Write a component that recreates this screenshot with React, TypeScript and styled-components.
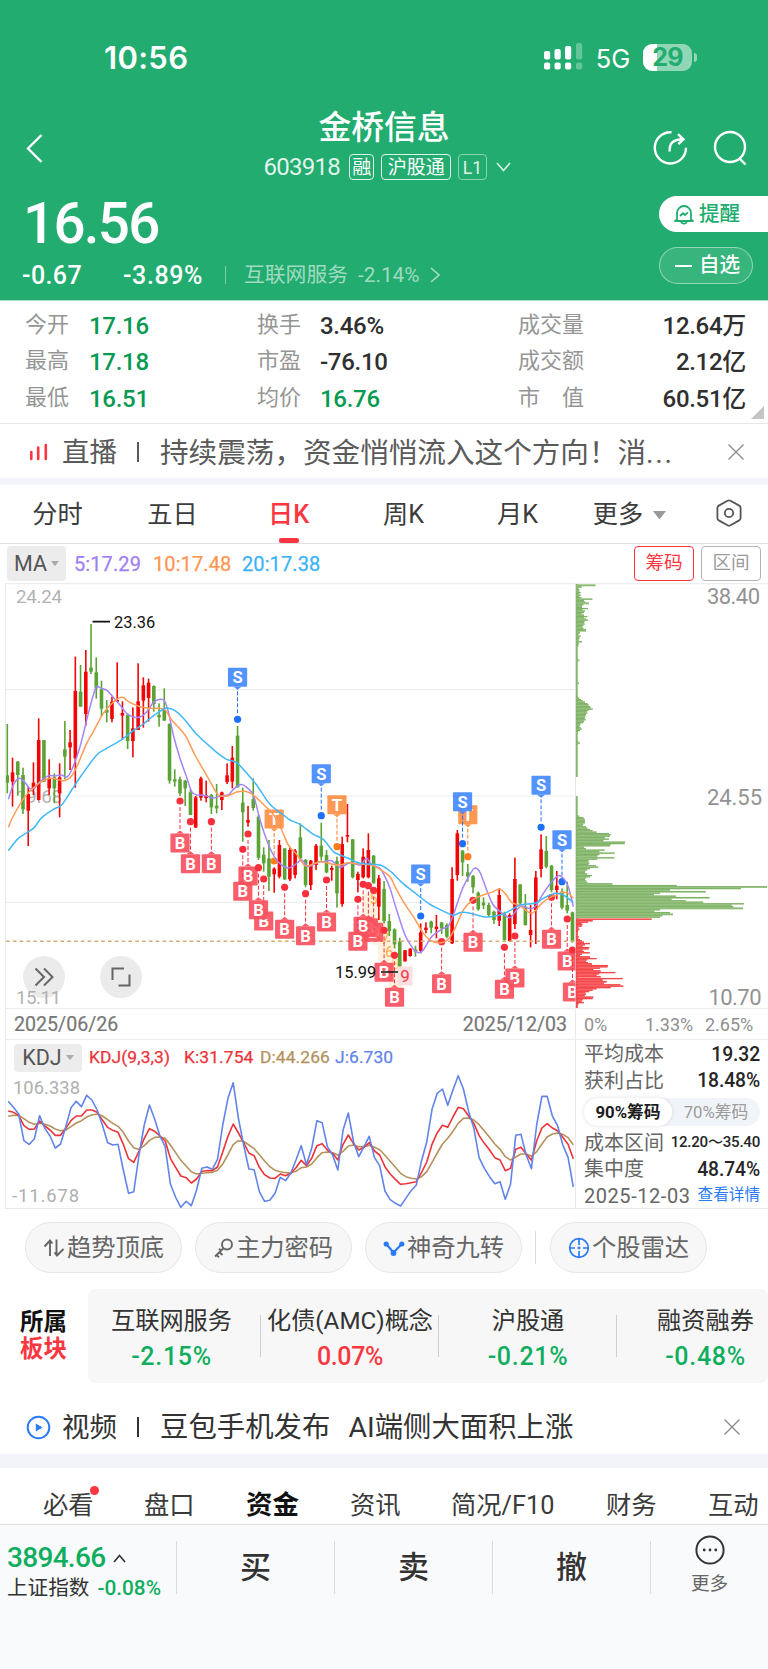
import React from 'react';
import styled, { createGlobalStyle, css } from 'styled-components';

const RED = '#fa3741';
const GREEN = '#0fae5f';
const BRAND = '#22ac6f';

const Global = createGlobalStyle`
  html, body { margin: 0; padding: 0; background: #fff; }
  * { box-sizing: border-box; }
  body {
    width: 768px;
    font-family: Roboto, "Noto Sans CJK SC", sans-serif;
    line-height: 1;
    color: #333;
    white-space: nowrap;
    overflow-x: hidden;
  }
  svg { display: block; flex: none; }
`;

const Page = styled.div`
  width: 768px;
  height: 1669px;
  display: flex;
  flex-direction: column;
  overflow: hidden;
  background: #fff;
`;

/* ---------- header ---------- */

const Header = styled.header`
  height: 301px;
  flex: none;
  background: ${BRAND};
  color: #fff;
  border-bottom: 1px solid #a5dfc5;
`;

const StatusBar = styled.div`
  height: 108px;
  padding: 6px 71px 0 104px;
  display: flex;
  align-items: center;
  font-family: Inter, sans-serif;
`;

const Clock = styled.span`
  font-size: 31px;
  font-weight: 600;
  letter-spacing: 0.3px;
  margin-right: auto;
`;

const Network = styled.span`
  font-size: 25.5px;
  margin: 3px 13px 0 13px;
  letter-spacing: -0.2px;
`;

const Battery = styled.div`
  width: 49px;
  height: 27px;
  border-radius: 9px;
  background: linear-gradient(90deg, #fff 14px, #90d6b7 14px);
  color: ${BRAND};
  font-size: 25px;
  font-weight: 700;
  letter-spacing: -0.8px;
  display: flex;
  align-items: center;
  justify-content: center;
`;

const BatteryNub = styled.i`
  width: 3px;
  height: 9px;
  margin-left: 2px;
  border-radius: 0 3px 3px 0;
  background: #90d6b7;
`;

const TitleBar = styled.div`
  height: 76px;
  padding: 2px 21px 0 25px;
  display: grid;
  grid-template-columns: 94px 1fr 98px;
  align-items: center;
`;

const TitleBlock = styled.div`
  display: flex;
  flex-direction: column;
  align-items: center;
  height: 76px;
`;

const StockName = styled.h1`
  margin: 0;
  height: 35px;
  line-height: 36px;
  font-size: 32.8px;
  font-weight: 500;
`;

const CodeLine = styled.div`
  margin: 9px 0 0 6px;
  height: 26px;
  display: flex;
  align-items: center;
  gap: 7px;
`;

const Code = styled.span`
  font-size: 24px;
  letter-spacing: -0.7px;
  color: rgba(255, 255, 255, 0.88);
  margin-right: 2px;
`;

const Tag = styled.span<{ $dim?: boolean }>`
  height: 26px;
  padding: 0 ${p => (p.$dim ? 3.5 : 5.5)}px;
  border: 1px solid rgba(255, 255, 255, ${p => (p.$dim ? 0.55 : 0.85)});
  border-radius: 4px;
  font-size: ${p => (p.$dim ? 17.6 : 19)}px;
  line-height: 26px;
  opacity: ${p => (p.$dim ? 0.85 : 1)};
  &:nth-child(2) { padding: 0 2px; }
`;

const TitleActions = styled.div`
  display: flex;
  justify-content: flex-end;
  gap: 25px;
`;

const Quote = styled.div`
  display: flex;
  justify-content: space-between;
  padding: 12px 0 0 22px;
`;

const Price = styled.div`
  margin-left: 1px;
  font-size: 56.5px;
  font-weight: 500;
  letter-spacing: -1.7px;
`;

const ChangeLine = styled.div`
  margin-top: 9.5px;
  height: 26px;
  display: flex;
  align-items: center;
  font-size: 25px;
  font-weight: 500;
`;

const Delta = styled.span`
  width: 101px;
  letter-spacing: 0.4px;
`;

const DeltaPct = styled.span`
  width: 102px;
  letter-spacing: 0.6px;
`;

const IndustryLink = styled.span`
  height: 18px;
  padding-left: 18px;
  border-left: 1px solid rgba(255, 255, 255, 0.4);
  display: flex;
  align-items: center;
  gap: 10px;
  font-size: 20.8px;
  font-weight: 400;
  color: rgba(255, 255, 255, 0.58);
`;

const QuoteActions = styled.div`
  width: 109px;
  display: flex;
  flex-direction: column;
  gap: 15px;
`;

const AlertButton = styled.div`
  height: 36px;
  padding-left: 15px;
  border-radius: 18px 0 0 18px;
  background: #fff;
  color: ${BRAND};
  display: flex;
  align-items: center;
  gap: 5px;
  font-size: 20.6px;
  font-weight: 500;
`;

const WatchButton = styled(AlertButton)`
  width: 94px;
  height: 37px;
  border-radius: 19px;
  border: 1px solid rgba(255, 255, 255, 0.45);
  background: rgba(255, 255, 255, 0.1);
  color: #fff;
  gap: 7px;
`;

/* ---------- key figures ---------- */

const Figures = styled.section`
  height: 123px;
  flex: none;
  padding: 5.5px 22px 0 25px;
  display: grid;
  grid-template-columns: 64px 168px 63px 198px 90px 1fr;
  grid-auto-rows: 36.6px;
  align-items: center;
  position: relative;
  border-bottom: 1px solid #e8e8e8;
`;

const FigureLabel = styled.span<{ $spread?: boolean }>`
  font-size: 22px;
  color: #959595;
  ${p => p.$spread && css`
    width: 66px;
    display: flex;
    justify-content: space-between;
  `}
`;

const FigureValue = styled.span<{ $down?: boolean; $right?: boolean }>`
  padding-top: 2px;
  font-size: 24px;
  font-weight: 500;
  letter-spacing: -0.3px;
  color: ${p => (p.$down ? '#079a52' : '#2f2f2f')};
  text-align: ${p => (p.$right ? 'right' : 'left')};
`;

const Corner = styled.i`
  position: absolute;
  right: 4px;
  bottom: 4px;
  border-style: solid;
  border-width: 0 0 13px 13px;
  border-color: transparent transparent #c4c4c4 transparent;
`;

/* ---------- news strips ---------- */

const LiveStrip = styled.section`
  height: 54px;
  flex: none;
  padding: 1px 24px 0 26px;
  display: flex;
  align-items: center;
  font-size: 28.6px;
  color: #5a5a5a;
`;

const VideoStrip = styled(LiveStrip)`
  height: 71px;
  padding: 17px 28px 0 26px;
  font-size: 28.4px;
  color: #333;
`;

const StripKind = styled.span`
  width: 75px;
  margin-left: 11px;
  padding-top: 2px;
  font-size: 27.5px;
`;

const StripBar = styled.i`
  width: 2px;
  height: 20px;
  background: currentColor;
  margin-right: 21px;
`;

const StripText = styled.span`
  flex: 1;
  padding-top: 3px;
  word-spacing: 11px;
`;

const Dots = styled.span`
  letter-spacing: 1.6px;
`;

const Band = styled.div<{ $h: number }>`
  height: ${p => p.$h}px;
  flex: none;
  background: #f2f4f9;
`;

/* ---------- period tabs ---------- */

const Periods = styled.nav`
  height: 59px;
  flex: none;
  display: grid;
  grid-template-columns: 115px 115px 117px 113px 115px 109px 1fr;
  border-bottom: 1px solid #e2e2e2;
  font-size: 25.2px;
  color: #3c3c3c;
`;

const Period = styled.div<{ $on?: boolean }>`
  position: relative;
  display: flex;
  align-items: center;
  justify-content: center;
  gap: 10px;
  padding-top: 2px;
  color: ${p => (p.$on ? RED : 'inherit')};
  font-weight: ${p => (p.$on ? 500 : 400)};
  ${p => p.$on && css`
    &::after {
      content: '';
      position: absolute;
      bottom: 0;
      left: 50%;
      width: 20px;
      height: 5px;
      margin-left: -10px;
      border-radius: 2px;
      background: ${RED};
    }
  `}
`;

const PeriodSettings = styled(Period)`
  padding: 0 0 2px 6px;
`;

/* ---------- chart ---------- */

const MaRow = styled.div`
  height: 39px;
  flex: none;
  padding: 0 7px;
  display: flex;
  align-items: center;
  font-size: 20px;
`;

const Picker = styled.span<{ $w: number; $h: number }>`
  width: ${p => p.$w}px;
  height: ${p => p.$h}px;
  border-radius: 4px;
  background: #ececec;
  display: flex;
  align-items: center;
  justify-content: center;
  gap: 4px;
  font-size: 21.5px;
  font-weight: 400;
  color: #555;
`;

const Legend = styled.span<{ $c: string; $w: number }>`
  width: ${p => p.$w}px;
  letter-spacing: 0.1px;
  color: ${p => p.$c};
  -webkit-text-stroke: 0.25px ${p => p.$c};
`;

const MaLegend = styled.div`
  display: flex;
  margin-left: 8px;
  flex: 1;
`;

const Toggle = styled.span<{ $on?: boolean }>`
  width: 60px;
  height: 35px;
  margin-left: 7px;
  border: 1px solid ${p => (p.$on ? RED : '#b4b4b4')};
  border-radius: 4px;
  color: ${p => (p.$on ? RED : '#999')};
  font-size: 18.6px;
  display: flex;
  align-items: center;
  justify-content: center;
`;

const ChartFrame = styled.section`
  position: relative;
  height: 626px;
  flex: none;
  margin-left: 5px;
  border-left: 1px solid #e9e9e9;
  border-bottom: 1px solid #e9e9e9;
  & > svg { position: relative; z-index: 1; }
`;

const RoundTools = styled.div`
  position: absolute;
  left: 17px;
  top: 373px;
  display: flex;
  gap: 35px;
`;

const RoundTool = styled.span`
  width: 42px;
  height: 42px;
  border-radius: 50%;
  background: #ebebeb;
  display: flex;
  align-items: center;
  justify-content: center;
`;

const AxisRow = styled.div`
  height: 32px;
  display: grid;
  grid-template-columns: 570px 1fr;
  border-bottom: 1px solid #ececec;
  border-top: 1px solid #ececec;
`;

const Dates = styled.div`
  padding: 1px 8px 0 8px;
  border-right: 1px solid #e9e9e9;
  display: flex;
  align-items: center;
  justify-content: space-between;
  font-size: 19.6px;
  color: #777;
  -webkit-text-stroke: 0.2px #777;
`;

const Shares = styled.div`
  padding: 1px 0 0 8px;
  display: grid;
  grid-template-columns: 61px 60px 1fr;
  align-items: center;
  font-size: 18px;
  color: #8f8f8f;
`;

const LowerRow = styled.div`
  display: grid;
  grid-template-columns: 570px 1fr;
  height: 168px;
`;

const Indicator = styled.div`
  border-right: 1px solid #e9e9e9;
`;

const IndicatorHead = styled.div`
  height: 34px;
  padding: 1px 0 0 8px;
  display: flex;
  align-items: center;
  font-size: 17.4px;
`;

const KdjLegends = styled.div`
  display: flex;
  margin-left: 7px;
`;

const Cost = styled.aside`
  padding: 1px 8px 0 8px;
  display: flex;
  flex-direction: column;
  color: #666;
`;

const CostRow = styled.div`
  height: 26.5px;
  display: flex;
  align-items: center;
  justify-content: space-between;
  font-size: 20px;
`;

const CostValue = styled.b<{ $small?: boolean }>`
  font-size: ${p => (p.$small ? 15.1 : 19.3)}px;
  letter-spacing: ${p => (p.$small ? -0.25 : -0.1)}px;
  font-weight: 500;
  color: #262626;
`;

const CostDate = styled.span`
  letter-spacing: 0.55px;
  color: #666;
`;

const DetailLink = styled.a`
  font-size: 15.6px;
  color: #2b7bf7;
`;

const Segments = styled.div`
  height: 28px;
  margin: 4px 0 3.5px;
  border-radius: 14px;
  background: #f1f5f9;
  display: grid;
  grid-template-columns: 1fr 1fr;
`;

const Segment = styled.span<{ $on?: boolean }>`
  border-radius: 14px;
  display: flex;
  align-items: center;
  justify-content: center;
  font-size: 16.8px;
  font-weight: ${p => (p.$on ? 700 : 400)};
  color: ${p => (p.$on ? '#1c1c1c' : '#9b9b9b')};
  ${p => p.$on && css`
    background: #fff;
    box-shadow: 0 0 4px rgba(120, 140, 160, 0.25);
  `}
`;

/* ---------- shortcuts & sectors ---------- */

const Shortcuts = styled.section`
  height: 80px;
  flex: none;
  padding: 13px 0 0 25px;
  display: flex;
  gap: 13px;
`;

const Chip = styled.div`
  width: 157px;
  height: 51px;
  border: 1px solid #e6e6e6;
  border-radius: 26px;
  background: #f7f7f7;
  display: flex;
  align-items: center;
  justify-content: center;
  gap: 2px;
  padding-top: 1px;
  font-size: 24.3px;
  color: #666;
`;

const ChipRule = styled.i`
  width: 1px;
  height: 33px;
  margin: 9px 1px 0 0;
  background: #dcdcdc;
`;

const Sectors = styled.section`
  height: 94px;
  flex: none;
  display: grid;
  grid-template-columns: 88px 680px;
`;

const SectorTitle = styled.div`
  padding: 22px 0 0 20px;
  display: flex;
  flex-direction: column;
  gap: 4px;
  font-size: 23.4px;
  font-weight: 700;
  color: #111;
  em { font-style: normal; color: ${RED}; }
`;

const SectorCard = styled.div`
  border-radius: 8px;
  background: #f7f7f7;
  display: grid;
  grid-template-columns: 173px 178px 178px 1fr;
`;

const Sector = styled.div<{ $up?: boolean }>`
  padding-top: 20px;
  display: flex;
  flex-direction: column;
  align-items: center;
  gap: 11px;
  font-size: 24.2px;
  color: #333;
  &:first-child { padding-right: 6px; }
  &:last-child { padding-left: 26px; }
  &:not(:last-child) {
    background: linear-gradient(#cfcfcf, #cfcfcf) right 26px / 1px 42px no-repeat;
  }
  b {
    font-size: 25px;
    font-weight: 500;
    letter-spacing: ${p => (p.$up ? -0.4 : 0.7)}px;
    color: ${p => (p.$up ? RED : GREEN)};
  }
`;

/* ---------- bottom ---------- */

const InfoTabs = styled.nav`
  height: 55px;
  flex: none;
  padding: 1px 9px 0 43px;
  display: grid;
  grid-template-columns: 101px 102px 104px 101px 155px 102px 1fr;
  align-items: center;
  color: #3a3a3a;
  margin-top: 1px;
`;

const InfoTab = styled.span<{ $on?: boolean; $dot?: boolean }>`
  position: relative;
  padding-top: 17px;
  font-size: ${p => (p.$on ? 26.5 : 25.3)}px;
  font-weight: ${p => (p.$on ? 700 : 400)};
  color: ${p => (p.$on ? '#111' : 'inherit')};
  ${p => p.$dot && css`
    &::after {
      content: '';
      position: absolute;
      left: 47px;
      top: 10px;
      width: 9px;
      height: 9px;
      border-radius: 50%;
      background: ${RED};
    }
  `}
`;

const TradeBar = styled.footer`
  flex: 1;
  border-top: 1px solid #dedede;
  background: #f9fafc;
  padding-top: 16px;
  display: grid;
  grid-template-columns: 176px 158px 158px 158px 118px;
  grid-template-rows: 53px;
`;

const IndexCell = styled.div`
  padding: 3px 0 0 7px;
  display: flex;
  flex-direction: column;
  gap: 6px;
`;

const IndexValue = styled.div`
  display: flex;
  align-items: center;
  gap: 8px;
  font-size: 28px;
  font-weight: 500;
  letter-spacing: -0.7px;
  color: ${GREEN};
`;

const IndexName = styled.div`
  display: flex;
  gap: 8px;
  font-size: 20.6px;
  color: #333;
  b { font-size: 20.8px; font-weight: 500; color: ${GREEN}; }
`;

const TradeCell = styled.div`
  border-left: 1px solid #dcdcdc;
  display: flex;
  align-items: center;
  justify-content: center;
  font-size: 31px;
  font-weight: 500;
  color: #333;
`;

const MoreCell = styled(TradeCell)`
  height: 53px;
  flex-direction: column;
  gap: 10px;
  padding-bottom: 6px;
  font-size: 18.6px;
  font-weight: 400;
  color: #666;
`;

/* ---------- chart data ---------- */

const T0 = 540;
const vy = (v: number) => T0 + v / 3;
const cx = (i: number) => 7.3 + i * 5.233;

// colour, wick top, wick bottom, body top, body bottom
const candles: [string, number, number, number, number][] = [
  ['g', 552, 760, 706, 728], ['r', 653, 800, 697, 725], ['g', 663, 767, 665, 705], ['g', 683, 822, 705, 808],
  ['r', 740, 918, 762, 812], ['r', 667, 765, 728, 745], ['r', 535, 782, 600, 780], ['g', 600, 725, 600, 725],
  ['r', 658, 765, 715, 745], ['g', 700, 790, 712, 745], ['r', 670, 832, 712, 760], ['g', 543, 718, 628, 650],
  ['r', 570, 690, 607, 622], ['r', 350, 743, 453, 655], ['g', 375, 500, 455, 500], ['r', 330, 557, 395, 522],
  ['g', 252, 402, 383, 395], ['g', 352, 476, 397, 445], ['g', 422, 528, 448, 506], ['g', 480, 547, 510, 518],
  ['r', 470, 547, 485, 537], ['r', 367, 485, 480, 485], ['r', 484, 600, 519, 527], ['g', 523, 627, 525, 603],
  ['r', 502, 652, 565, 603], ['r', 370, 570, 484, 570], ['r', 412, 563, 436, 482], ['r', 416, 545, 428, 474],
  ['g', 436, 515, 438, 492], ['g', 490, 560, 525, 532], ['g', 445, 542, 510, 542], ['g', 550, 731, 552, 722],
  ['g', 688, 740, 718, 725], ['g', 710, 768, 718, 760], ['g', 720, 798, 722, 745], ['g', 748, 825, 757, 825],
  ['r', 768, 863, 772, 863], ['r', 710, 782, 715, 773], ['r', 722, 787, 766, 774], ['g', 762, 822, 765, 802],
  ['g', 732, 820, 797, 805], ['r', 755, 810, 757, 780], ['r', 670, 732, 706, 726], ['r', 618, 745, 653, 725],
  ['g', 558, 743, 587, 742], ['g', 743, 905, 788, 817], ['r', 798, 860, 840, 848], ['g', 715, 812, 778, 804],
  ['g', 825, 960, 830, 953], ['g', 922, 995, 944, 970], ['g', 900, 1053, 955, 1010], ['r', 982, 1058, 986, 1003],
  ['r', 900, 1015, 915, 1010], ['g', 925, 1020, 925, 1018], ['r', 923, 1023, 930, 1018], ['r', 927, 1015, 932, 1005],
  ['g', 850, 960, 892, 955], ['g', 957, 1042, 960, 1035], ['r', 960, 1050, 962, 1035], ['r', 912, 990, 917, 975],
  ['g', 848, 962, 917, 950], ['g', 930, 1000, 945, 997], ['r', 977, 1022, 984, 990], ['g', 950, 1103, 963, 1060],
  ['r', 890, 1100, 912, 1092], ['r', 792, 907, 885, 890], ['g', 897, 1015, 898, 1012], ['r', 995, 1057, 1002, 1020],
  ['r', 925, 1015, 950, 1012], ['r', 880, 1015, 930, 1012], ['g', 945, 1030, 947, 1030], ['r', 1005, 1140, 1015, 1100],
  ['g', 1023, 1150, 1047, 1143], ['g', 1122, 1188, 1143, 1173], ['g', 1165, 1225, 1168, 1213], ['g', 1193, 1282, 1205, 1280],
  ['r', 1230, 1265, 1231, 1264], ['r', 1225, 1250, 1226, 1248], ['g', 1217, 1250, 1228, 1235], ['r', 1150, 1240, 1177, 1233],
  ['r', 1147, 1180, 1163, 1170], ['g', 1142, 1180, 1145, 1163], ['r', 1125, 1195, 1160, 1167], ['g', 1147, 1182, 1147, 1165],
  ['g', 1150, 1195, 1155, 1190], ['r', 982, 1212, 1017, 1210], ['r', 870, 1022, 880, 1005], ['g', 930, 1008, 932, 967],
  ['g', 972, 1025, 997, 1010], ['g', 1005, 1060, 1008, 1042], ['g', 1055, 1112, 1058, 1108], ['g', 1072, 1107, 1088, 1096],
  ['g', 1088, 1132, 1095, 1125], ['g', 1112, 1152, 1115, 1140], ['r', 1045, 1158, 1065, 1142], ['g', 1115, 1202, 1120, 1200],
  ['r', 1120, 1205, 1125, 1203], ['r', 953, 1167, 1017, 1152], ['g', 1033, 1095, 1033, 1090], ['g', 1062, 1157, 1100, 1155],
  ['r', 1095, 1222, 1170, 1185], ['r', 993, 1212, 1012, 1110], ['r', 883, 1012, 928, 987], ['g', 888, 985, 933, 980],
  ['g', 975, 1057, 977, 1050], ['r', 993, 1078, 1037, 1050], ['g', 1045, 1108, 1055, 1103], ['g', 1025, 1120, 1095, 1112],
  ['g', 1115, 1208, 1117, 1205],
];

const ma5 = [25,778,40,735,57,715,72,724,90,746,105,742,120,725,147,707,165,708,185,705,200,711,215,690,240,620,265,520,280,465,290,440,305,445,322,452,340,472,360,495,380,520,400,531,420,531,440,516,460,488,480,478,493,482,505,515,520,585,540,655,560,712,575,755,590,765,610,765,640,774,665,767,685,765,700,748,720,734,735,738,760,765,780,840,800,900,820,945,840,971,865,984,885,974,905,960,925,980,950,968,970,965,995,962,1020,982,1050,968,1080,975,1100,955,1115,975,1140,985,1155,1010,1170,1045,1190,1110,1215,1185,1240,1227,1255,1238,1270,1230,1295,1190,1325,1168,1345,1158,1360,1125,1385,1052,1405,1012,1423,985,1440,997,1460,1050,1480,1095,1510,1122,1530,1133,1550,1110,1565,1098,1585,1105,1605,1100,1630,1060,1655,1025,1675,1007,1690,1015,1705,1040,1720,1100];
const ma10 = [25,862,40,828,75,770,110,735,150,715,190,722,215,708,235,670,260,610,280,575,310,520,345,482,368,472,385,485,420,500,450,505,493,508,515,540,555,585,585,645,625,715,655,765,685,767,710,756,735,754,760,765,795,798,820,823,845,870,865,915,890,943,915,977,940,972,965,965,995,972,1020,975,1045,968,1080,972,1115,975,1140,988,1170,1010,1185,1040,1210,1085,1240,1130,1270,1180,1295,1203,1325,1208,1345,1198,1365,1165,1390,1110,1420,1078,1450,1065,1475,1057,1498,1047,1515,1060,1535,1087,1560,1097,1595,1120,1625,1090,1655,1070,1670,1065,1685,1057,1705,1060,1720,1075];
const ma20 = [25,932,55,895,100,865,125,833,160,808,185,795,215,750,245,705,290,645,320,625,360,602,400,572,430,552,450,535,475,517,500,504,525,512,555,540,590,583,650,637,680,658,710,668,745,705,770,735,810,793,850,825,870,840,900,853,940,883,970,898,1000,935,1020,945,1050,957,1080,970,1140,975,1175,997,1205,1027,1240,1055,1290,1093,1340,1118,1360,1126,1385,1117,1420,1122,1455,1131,1500,1125,1530,1112,1560,1095,1605,1090,1630,1075,1665,1060,1690,1065,1720,1087];

// smooth curve through the averages
const curve = (flat: number[]) => {
  const pts: [number, number][] = [];
  for (let i = 0; i < flat.length; i += 2) pts.push([flat[i] / 3, vy(flat[i + 1])]);
  let d = `M${pts[0][0]} ${pts[0][1]}`;
  for (let i = 0; i < pts.length - 1; i++) {
    const a = pts[Math.max(0, i - 1)];
    const b = pts[i];
    const c = pts[i + 1];
    const e = pts[Math.min(pts.length - 1, i + 2)];
    d += `C${b[0] + (c[0] - a[0]) / 7} ${b[1] + (c[1] - a[1]) / 7} ${c[0] - (e[0] - b[0]) / 7} ${c[1] - (e[1] - b[1]) / 7} ${c[0]} ${c[1]}`;
  }
  return d;
};

type Mark = [kind: 'B' | 'S' | 'T', index: number, level: number];
const marks: Mark[] = [
  ['B', 33, 783], ['B', 35, 845], ['B', 39, 845], ['B', 46, 882], ['B', 45, 928], ['B', 49, 1017], ['B', 48, 983],
  ['B', 53, 1042], ['B', 57, 1061], ['B', 61, 1020], ['B', 70, 1051], ['B', 69, 1037], ['B', 68, 1033], ['B', 67, 1078],
  ['B', 72, 1171], ['B', 74, 1246], ['B', 83, 1205], ['B', 89, 1081], ['B', 97, 1188], ['B', 95, 1222],
  ['B', 104, 1072], ['B', 107, 1137], ['B', 108, 1230],
  ['T', 51, 963], ['T', 63, 920], ['T', 88, 950],
  ['S', 44, 538], ['S', 60, 827], ['S', 79, 1128], ['S', 87, 911], ['S', 102, 862], ['S', 106, 1025],
];
const markFill = { B: '#f9525f', S: '#478bff', T: '#ff9147' };
const markDot = { B: '#fa2f3e', S: '#1f6fff', T: '#ff7d1a' };

// level, bar end
const chipsUp = [136,107,141,65,146,55,150,58,154,58,158,62,162,58,166,62,170,58,174,64,178,97,182,72,186,75,190,87,195,70,199,66,203,66,206,84,210,68,214,75,218,72,222,65,226,72,230,82,234,72,238,78,241,84,245,74,249,72,253,74,257,70,261,66,265,70,269,78,273,78,277,60,281,58,285,55,289,62,293,58,297,58,301,56,306,66,310,57,314,55,318,55,361,58,430,57,471,54,475,58,479,63,483,68,487,75,491,82,495,86,500,90,504,92,508,98,512,85,516,80,520,82,524,78,528,76,532,76,536,74,540,77,544,72,548,70,552,62,556,60,560,58,564,62,568,65,572,60,576,54,606,55,610,60,614,54,829,58,833,70,837,73,841,75,845,74,849,75,853,70,857,68,861,78,865,82,869,90,873,98,877,110,881,147,885,152,889,150,893,135,898,147,902,130,907,195,911,194,915,152,918,150,922,72,926,78,931,134,935,118,940,164,944,118,948,112,954,163,958,112,962,86,966,85,970,88,974,85,978,108,982,115,986,90,990,82,994,76,998,75,1002,82,1007,96,1011,90,1015,78,1019,75,1023,78,1027,82,1032,157,1037,350,1041,621,1046,543,1050,330,1055,437,1060,300,1064,282,1069,348,1073,449,1078,335,1083,377,1087,430,1092,552,1096,515,1100,520,1105,549,1110,300,1114,283,1118,330,1123,339,1128,307,1132,300];
const chipsDown = [1138,275,1142,98,1147,84,1151,65,1155,68,1159,65,1163,55,1168,58,1172,55,1176,54,1180,53,1185,54,1190,56,1195,55,1199,60,1203,66,1207,72,1211,90,1215,75,1219,68,1223,88,1227,86,1231,68,1235,72,1239,89,1243,66,1247,60,1251,90,1256,110,1260,82,1264,78,1268,84,1272,96,1277,144,1281,143,1285,120,1289,100,1293,122,1298,166,1302,118,1306,110,1310,122,1316,188,1320,128,1325,140,1330,132,1335,181,1339,190,1343,152,1347,110,1351,98,1355,88,1359,76,1363,78,1367,74,1372,100,1376,98,1380,68,1384,65,1388,72,1392,56,1396,54,1400,52];

const bars = (flat: number[], light: string, dark: string) => {
  const out: React.ReactNode[] = [];
  for (let i = 0; i < flat.length; i += 2) {
    const next = flat[i + 2] ?? flat[i] + 4;
    const h = Math.min(next - flat[i], 5) / 3 + 0.05;
    const w = (flat[i + 1] - 48) / 3;
    const y = vy(flat[i]) - 0.7;
    out.push(
      <g key={i}>
        <rect x={576} y={y} width={w} height={h} fill={light} />
        <rect x={576} y={y} width={w} height={0.6} fill={dark} />
      </g>,
    );
  }
  return out;
};

const lineJ = [214,232,252,332,343,327,257,295,318,354,342,290,233,214,230,196,210,240,285,338,345,343,420,490,485,375,285,225,268,318,350,462,502,532,514,527,480,415,411,418,388,285,205,158,265,345,417,419,485,514,511,490,442,452,430,390,347,404,355,272,278,350,375,420,300,249,335,380,350,319,383,407,483,509,520,528,505,482,465,392,335,238,190,177,226,180,137,177,245,295,383,415,440,461,455,508,463,316,313,375,416,285,199,199,258,287,345,382,471];
const lineK = [243,247,256,287,298,297,273,288,300,316,316,295,272,258,258,240,240,247,270,292,301,307,343,386,397,363,325,296,304,318,333,385,412,438,443,459,447,424,422,422,411,366,319,282,309,338,369,377,412,434,444,445,432,437,430,413,391,407,385,347,341,360,370,390,343,315,341,360,352,338,363,375,410,432,448,463,461,458,455,427,396,343,308,286,292,261,232,236,258,280,317,340,360,383,390,422,415,358,352,372,391,333,294,281,294,302,322,343,386];
const lineD = [259,256,256,266,277,283,280,283,288,297,302,300,290,279,272,261,255,252,258,269,280,289,307,333,354,358,347,331,322,321,325,345,368,391,408,425,432,430,428,427,421,402,374,344,332,334,345,356,374,393,410,421,425,428,429,424,413,411,402,383,368,366,368,375,364,348,345,350,350,346,352,359,376,394,412,430,440,445,447,440,425,397,369,342,325,304,280,265,264,270,284,303,322,342,358,380,390,381,372,372,379,365,342,321,312,309,313,323,344];
const kdjPoints = (ys: number[]) =>
  ys.map((v, i) => `${(8.2 + (i * 565.1) / (ys.length - 1)).toFixed(2)},${(1030 + v / 3).toFixed(2)}`).join(' ');

/* ---------- chart drawings ---------- */

const Marker = ({ kind, index, level }: { kind: 'B' | 'S' | 'T'; index: number; level: number }) => {
  const x = cx(index);
  const y = vy(level);
  const dir = kind === 'B' ? 1 : -1;
  const box = y + dir * 42;
  const edge = box - dir * 9.5;
  return (
    <g>
      <line x1={x} y1={y + dir * 6} x2={x} y2={edge} stroke={markDot[kind]} strokeWidth={1} strokeDasharray="4 2" />
      <circle cx={x} cy={y} r={3.6} fill={markDot[kind]} />
      <g fill={markFill[kind]} opacity={0.93}>
        <rect x={x - 9.6} y={box - 9.5} width={19.2} height={19} rx={1} />
        <path d={`M${x - 4} ${edge}L${x} ${edge - dir * 3}L${x + 4} ${edge}Z`} />
      </g>
      <text x={x} y={box + 5.9} textAnchor="middle" fontSize={16.6} fontWeight={700} fill="#fff">{kind}</text>
    </g>
  );
};

const PriceChart = () => (
  <svg width={762} height={425} viewBox="6 583 762 425">
    <defs>
      <clipPath id="plot"><rect x={6} y={583} width={569.5} height={425} /></clipPath>
    </defs>
    {[583.7, 689.6, 796, 902.4].map(y => (
      <line key={y} x1={6} x2={y < 600 ? 768 : 575} y1={y} y2={y} stroke="#ededed" strokeWidth={1.2} />
    ))}
    <line x1={575.5} x2={575.5} y1={583} y2={1008} stroke="#e6e6e6" />
    <g fontSize={18.8} fill="#a8a8a8" fillOpacity={0.9}>
      <text x={16} y={602.5} textLength={46}>24.24</text>
      <text x={16} y={803} textLength={46}>19.68</text>
      <text x={16} y={1004} textLength={45}>15.11</text>
    </g>
    <g clipPath="url(#plot)">
      <g fill="#fff2df">
        {[[69, 1060], [70, 1075], [71, 1130], [72, 1180], [73, 1210], [74, 1280]].map(([i, v]) => (
          <rect key={i} x={cx(i) - 6} y={vy(v)} width={13} height={28} />
        ))}
      </g>
      <g fontSize={14} fill="#ffab3d" textAnchor="middle">
        <text x={cx(70)} y={904}>5</text>
        <text x={cx(72) + 1} y={944}>7</text>
        <text x={cx(73)} y={957}>6</text>
        <text x={cx(74) + 1} y={969} opacity={0.6}>8</text>
      </g>
      {candles.map(([c, h, l, t, b], i) => (
        <g key={i} fill={c === 'r' ? '#f00606' : '#5ba334'}>
          <rect x={cx(i) - 0.8} y={vy(h)} width={1.6} height={(l - h) / 3} />
          <rect x={cx(i) - 1.8} y={vy(t)} width={3.6} height={Math.max(1.6, (b - t) / 3)} />
        </g>
      ))}
      <line x1={6} x2={575} y1={941.2} y2={941.2} stroke="#d3b077" strokeWidth={1.6} strokeDasharray="3.7 3.1" />
      {marks.map(([k, i, v]) => <Marker key={`${k}${i}`} kind={k} index={i} level={v} />)}
      <g fill="none" strokeWidth={1.5} strokeLinejoin="round">
        <path d={curve(ma5)} stroke="#a485f5" />
        <path d={curve(ma10)} stroke="#ff9c57" />
        <path d={curve(ma20)} stroke="#42b8fb" />
      </g>
      <rect x={397.5} y={966.5} width={15} height={19} fill="#fddede" />
      <text x={405} y={982} textAnchor="middle" fontSize={17} fill="#f23b47">9</text>
    </g>
    <g fontSize={16.4} fill="#111">
      <text x={114} y={628}>23.36</text>
      <text x={335} y={978}>15.99</text>
    </g>
    <path d="M92.5 621.7H110M381 972H398" stroke="#111" strokeWidth={1.7} />
    <g>
      <path d="M576.8 584V777M576.8 796V919" stroke="#83b768" strokeWidth={1.8} />
      <path d="M576.8 920V1008" stroke="#f5494c" strokeWidth={1.8} />
      {bars(chipsUp, '#97c482', '#6fa653')}
      {bars(chipsDown, '#fb6264', '#ef3336')}
    </g>
    <g fontSize={22} fill="#929292">
      <text x={707} y={604} textLength={53}>38.40</text>
      <text x={707} y={804.5} textLength={55}>24.55</text>
      <text x={708.5} y={1005} textLength={53}>10.70</text>
    </g>
  </svg>
);

const KdjChart = () => (
  <svg width={568} height={134} viewBox="6 1074 568 134" overflow="visible">
    <g fontSize={18.4} fill="#b0b0b0">
      <text x={13} y={1094} textLength={67}>106.338</text>
      <text x={12} y={1202} textLength={67}>-11.678</text>
    </g>
    <g fill="none" strokeWidth={1.6} strokeLinejoin="round">
      <polyline points={kdjPoints(lineD)} stroke="#b3925c" />
      <polyline points={kdjPoints(lineK)} stroke="#ee3338" />
      <polyline points={kdjPoints(lineJ)} stroke="#6284e8" />
    </g>
  </svg>
);

/* ---------- icons ---------- */

const SignalIcon = () => (
  <svg width={39} height={28} viewBox="0 0 39 28" fill="#fff">
    {[[0, 8], [10.5, 6], [21, 3], [32, 0]].map(([x, y], i) => (
      <g key={x} opacity={i === 3 ? 0.3 : 1}>
        <rect x={x} y={y} width={6.2} height={16.5 - y} rx={2} />
        <rect x={x} y={19.5} width={6.2} height={7} rx={2} />
      </g>
    ))}
  </svg>
);

const BackIcon = () => (
  <svg width={18} height={30} viewBox="0 0 18 30" fill="none" stroke="#fff" strokeWidth={2.4}>
    <path d="M16.5 2L3 15.5L16.5 29" />
  </svg>
);

const ShareIcon = () => (
  <svg width={35} height={36} viewBox="0 0 35 36" fill="none" stroke="#fff" strokeWidth={2.4}>
    <path d="M18.5 2.3A15.6 15.6 0 1 0 33 17.8" />
    <path d="M16.6 21.5C16.4 13.5 19.5 9.4 30 9.2" />
    <path d="M25 4.2L30.5 9.3L25.3 14.2" />
  </svg>
);

const SearchIcon = () => (
  <svg width={34} height={36} viewBox="0 0 34 36" fill="none" stroke="#fff" strokeWidth={2.4}>
    <circle cx={17} cy={17} r={15} />
    <path d="M26.5 28.5L32.5 34.5" />
  </svg>
);

const Chevron = ({ w, h, d, color, sw = 1.6 }: { w: number; h: number; d: string; color: string; sw?: number }) => (
  <svg width={w} height={h} viewBox={`0 0 ${w} ${h}`} fill="none" stroke={color} strokeWidth={sw}><path d={d} /></svg>
);

const BellIcon = () => (
  <svg width={20} height={21} viewBox="0 0 20 21" fill="none" stroke={BRAND} strokeWidth={1.8}>
    <path d="M3 15.5V9A7 7 0 0 1 17 9V15.5L19 17H1Z" strokeLinejoin="round" />
    <path d="M7 17.5C8 20.4 12 20.4 13 17.5M6 12L9 9.3L11 11L14 8.3" />
  </svg>
);

const Caret = ({ size, color }: { size: number; color: string }) => (
  <svg width={size} height={size * 0.65} viewBox="0 0 10 6.5"><path d="M0 0H10L5 6.5Z" fill={color} /></svg>
);

const LiveIcon = () => (
  <svg width={25} height={18} viewBox="0 0 25 18" stroke={RED} strokeWidth={2.6} strokeLinecap="round">
    <path d="M5.3 9V16M12.2 4.5V16M19.8 2V16" />
  </svg>
);

const CloseIcon = () => (
  <svg width={16} height={16} viewBox="0 0 16 16" stroke="#8a8a8a" strokeWidth={1.4}><path d="M0.5 0.5L15.5 15.5M15.5 0.5L0.5 15.5" /></svg>
);

const HexIcon = () => (
  <svg width={26} height={28} viewBox="0 0 26 28" fill="none" stroke="#555" strokeWidth={1.8}>
    <path d="M11.5 1.7Q13 0.9 14.5 1.7L23.2 6.6Q24.6 7.5 24.6 9V19Q24.6 20.5 23.2 21.4L14.5 26.3Q13 27.1 11.5 26.3L2.8 21.4Q1.4 20.5 1.4 19V9Q1.4 7.5 2.8 6.6Z" />
    <circle cx={13} cy={14} r={4.2} />
  </svg>
);

const SortIcon = () => (
  <svg width={22} height={20} viewBox="0 0 22 20" fill="none" stroke="#666" strokeWidth={1.9}>
    <path d="M7 18V2.5M1.5 8.5L7 2.5L9.5 5.5M13.5 1.5V17M20.5 11L14 17.5L11.5 14.5" />
  </svg>
);

const KeyIcon = () => (
  <svg width={20} height={20} viewBox="0 0 20 20" fill="none" stroke="#666" strokeWidth={1.9}>
    <circle cx={13} cy={6.5} r={5} /><path d="M9.5 10.3L1 18.5M5.5 14.2L8.5 17M2.5 17L5 19.3M7 12.5L5 10.8" />
  </svg>
);

const TurnIcon = () => (
  <svg width={22} height={18} viewBox="0 0 22 18" fill="#2b7bf7">
    <circle cx={3.2} cy={5} r={2.6} /><circle cx={18.8} cy={5} r={2.6} /><circle cx={10.5} cy={14} r={2.9} />
    <path d="M3.2 5L10.5 13.5L18.8 5" fill="none" stroke="#2b7bf7" strokeWidth={2.2} />
  </svg>
);

const RadarIcon = () => (
  <svg width={22} height={22} viewBox="0 0 22 22" fill="none" stroke="#2b7bf7" strokeWidth={1.7}>
    <circle cx={11} cy={11} r={9.3} /><path d="M11 1.5V8M11 14V20.5M1.5 11H7M15 11H20.5" /><circle cx={11} cy={11} r={1.4} fill="#2b7bf7" stroke="none" />
  </svg>
);

const PlayIcon = () => (
  <svg width={25} height={25} viewBox="0 0 25 25" fill="none" stroke="#2b7bf7" strokeWidth={2}>
    <circle cx={12.5} cy={12.5} r={10.8} /><path d="M9.8 8.6V16.4L16.6 12.5Z" fill="#2b7bf7" stroke="none" />
  </svg>
);

const MoreIcon = () => (
  <svg width={30} height={30} viewBox="0 0 30 30" fill="#333">
    <circle cx={15} cy={15} r={13.6} fill="none" stroke="#333" strokeWidth={2} />
    <circle cx={9.2} cy={15} r={1.4} /><circle cx={15} cy={15} r={1.4} /><circle cx={20.8} cy={15} r={1.4} />
  </svg>
);

export default function App() {
  return (
    <Page>
      <Global />
      <Header>
        <StatusBar>
          <Clock>10:56</Clock>
          <SignalIcon />
          <Network>5G</Network>
          <Battery>29</Battery>
          <BatteryNub />
        </StatusBar>
        <TitleBar>
          <BackIcon />
          <TitleBlock>
            <StockName>金桥信息</StockName>
            <CodeLine>
              <Code>603918</Code>
              <Tag>融</Tag>
              <Tag>沪股通</Tag>
              <Tag $dim>L1</Tag>
              <Chevron w={17} h={10} d="M3 1L9.5 8.5L16 1" color="#d6f0e4" />
            </CodeLine>
          </TitleBlock>
          <TitleActions><ShareIcon /><SearchIcon /></TitleActions>
        </TitleBar>
        <Quote>
          <div>
            <Price>16.56</Price>
            <ChangeLine>
              <Delta>-0.67</Delta>
              <DeltaPct>-3.89%</DeltaPct>
              <IndustryLink>
                互联网服务<span>-2.14%</span>
                <Chevron w={10} h={16} d="M1 1L9 8L1 15" color="#a6dec5" />
              </IndustryLink>
            </ChangeLine>
          </div>
          <QuoteActions>
            <AlertButton><BellIcon />提醒</AlertButton>
            <WatchButton><Chevron w={17} h={4} d="M0 2H17" color="#fff" sw={2} />自选</WatchButton>
          </QuoteActions>
        </Quote>
      </Header>

      <Figures>
        <FigureLabel>今开</FigureLabel><FigureValue $down>17.16</FigureValue>
        <FigureLabel>换手</FigureLabel><FigureValue>3.46%</FigureValue>
        <FigureLabel>成交量</FigureLabel><FigureValue $right>12.64万</FigureValue>
        <FigureLabel>最高</FigureLabel><FigureValue $down>17.18</FigureValue>
        <FigureLabel>市盈</FigureLabel><FigureValue>-76.10</FigureValue>
        <FigureLabel>成交额</FigureLabel><FigureValue $right>2.12亿</FigureValue>
        <FigureLabel>最低</FigureLabel><FigureValue $down>16.51</FigureValue>
        <FigureLabel>均价</FigureLabel><FigureValue $down>16.76</FigureValue>
        <FigureLabel $spread><span>市</span><span>值</span></FigureLabel><FigureValue $right>60.51亿</FigureValue>
        <Corner />
      </Figures>

      <LiveStrip>
        <LiveIcon />
        <StripKind>直播</StripKind>
        <StripBar />
        <StripText>持续震荡，资金悄悄流入这个方向！消<Dots>...</Dots></StripText>
        <CloseIcon />
      </LiveStrip>
      <Band $h={7} />

      <Periods>
        <Period>分时</Period>
        <Period>五日</Period>
        <Period $on>日K</Period>
        <Period>周K</Period>
        <Period>月K</Period>
        <Period>更多<Caret size={13} color="#999" /></Period>
        <PeriodSettings><HexIcon /></PeriodSettings>
      </Periods>

      <MaRow>
        <Picker $w={59} $h={35}>MA<Caret size={8} color="#aaa" /></Picker>
        <MaLegend>
          <Legend $c="#9f80f3" $w={79}>5:17.29</Legend>
          <Legend $c="#ff9550" $w={89}>10:17.48</Legend>
          <Legend $c="#3bb2f8" $w={90}>20:17.38</Legend>
        </MaLegend>
        <Toggle $on>筹码</Toggle>
        <Toggle>区间</Toggle>
      </MaRow>

      <ChartFrame>
        <RoundTools>
          <RoundTool><Chevron w={20} h={20} d="M1.5 1.5L10 10L1.5 18.5M10 1.5L18.5 10L10 18.5" color="#666" sw={2} /></RoundTool>
          <RoundTool><Chevron w={20} h={20} d="M1.5 13V1.5H13M18.5 7.5V18.5H7.5" color="#666" sw={2} /></RoundTool>
        </RoundTools>
        <PriceChart />
        <AxisRow>
          <Dates><span>2025/06/26</span><span>2025/12/03</span></Dates>
          <Shares><span>0%</span><span>1.33%</span><span>2.65%</span></Shares>
        </AxisRow>
        <LowerRow>
          <Indicator>
            <IndicatorHead>
              <Picker $w={68} $h={28}>KDJ<Caret size={8} color="#aaa" /></Picker>
              <KdjLegends>
                <Legend $c="#ec3238" $w={95}>KDJ(9,3,3)</Legend>
                <Legend $c="#ec3238" $w={76}>K:31.754</Legend>
                <Legend $c="#b3925c" $w={75}>D:44.266</Legend>
                <Legend $c="#6284e8" $w={70}>J:6.730</Legend>
              </KdjLegends>
            </IndicatorHead>
            <KdjChart />
          </Indicator>
          <Cost>
            <CostRow>平均成本<CostValue>19.32</CostValue></CostRow>
            <CostRow>获利占比<CostValue>18.48%</CostValue></CostRow>
            <Segments><Segment $on>90%筹码</Segment><Segment>70%筹码</Segment></Segments>
            <CostRow>成本区间<CostValue $small>12.20～35.40</CostValue></CostRow>
            <CostRow>集中度<CostValue>48.74%</CostValue></CostRow>
            <CostRow><CostDate>2025-12-03</CostDate><DetailLink>查看详情</DetailLink></CostRow>
          </Cost>
        </LowerRow>
      </ChartFrame>

      <Shortcuts>
        <Chip><SortIcon />趋势顶底</Chip>
        <Chip><KeyIcon />主力密码</Chip>
        <Chip><TurnIcon />神奇九转</Chip>
        <ChipRule />
        <Chip><RadarIcon />个股雷达</Chip>
      </Shortcuts>

      <Sectors>
        <SectorTitle>所属<em>板块</em></SectorTitle>
        <SectorCard>
          <Sector>互联网服务<b>-2.15%</b></Sector>
          <Sector $up>化债(AMC)概念<b>0.07%</b></Sector>
          <Sector>沪股通<b>-0.21%</b></Sector>
          <Sector>融资融券<b>-0.48%</b></Sector>
        </SectorCard>
      </Sectors>

      <VideoStrip>
        <PlayIcon />
        <StripKind>视频</StripKind>
        <StripBar />
        <StripText>豆包手机发布 AI端侧大面积上涨</StripText>
        <CloseIcon />
      </VideoStrip>
      <Band $h={14} />

      <InfoTabs>
        <InfoTab $dot>必看</InfoTab>
        <InfoTab>盘口</InfoTab>
        <InfoTab $on>资金</InfoTab>
        <InfoTab>资讯</InfoTab>
        <InfoTab>简况/F10</InfoTab>
        <InfoTab>财务</InfoTab>
        <InfoTab>互动</InfoTab>
      </InfoTabs>

      <TradeBar>
        <IndexCell>
          <IndexValue>3894.66<Chevron w={13} h={9} d="M1 8L6.5 1.5L12 8" color="#333" /></IndexValue>
          <IndexName>上证指数<b>-0.08%</b></IndexName>
        </IndexCell>
        <TradeCell>买</TradeCell>
        <TradeCell>卖</TradeCell>
        <TradeCell>撤</TradeCell>
        <MoreCell><MoreIcon />更多</MoreCell>
      </TradeBar>
    </Page>
  );
}
